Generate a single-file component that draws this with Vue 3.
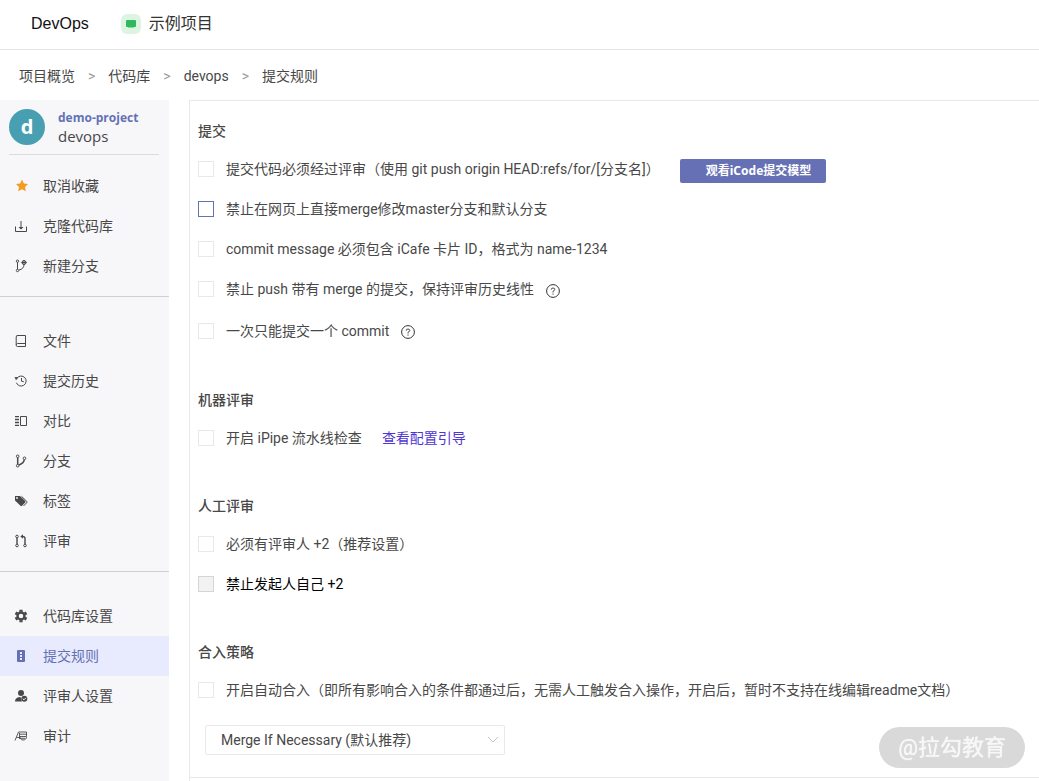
<script setup>
import { ref } from 'vue'

const crumbs = ['项目概览', '代码库', 'devops', '提交规则']

const groups = [
  [
    { icon: 'star', text: '取消收藏' },
    { icon: 'download', text: '克隆代码库' },
    { icon: 'fork', text: '新建分支' },
  ],
  [
    { icon: 'book', text: '文件' },
    { icon: 'history', text: '提交历史' },
    { icon: 'compare', text: '对比' },
    { icon: 'branch', text: '分支' },
    { icon: 'tags', text: '标签' },
    { icon: 'pull', text: '评审' },
  ],
  [
    { icon: 'gear', text: '代码库设置' },
    { icon: 'rules', text: '提交规则', active: true },
    { icon: 'reviewer', text: '评审人设置' },
    { icon: 'audit', text: '审计' },
  ],
]

const sections = [
  {
    title: '提交',
    rows: [
      { id: 'review', text: '提交代码必须经过评审（使用 git push origin HEAD:refs/for/[分支名]）', button: '观看iCode提交模型' },
      { id: 'web-merge', text: '禁止在网页上直接merge修改master分支和默认分支', focus: true },
      { id: 'card', text: 'commit message 必须包含 iCafe 卡片 ID，格式为 name-1234' },
      { id: 'linear', text: '禁止 push 带有 merge 的提交，保持评审历史线性', hint: true },
      { id: 'single', text: '一次只能提交一个 commit', hint: true },
    ],
  },
  { title: '机器评审', rows: [{ id: 'pipe', text: '开启 iPipe 流水线检查', link: '查看配置引导' }] },
  {
    title: '人工评审',
    rows: [
      { id: 'plus2', text: '必须有评审人 +2（推荐设置）' },
      { id: 'self', text: '禁止发起人自己 +2', disabled: true },
    ],
  },
  {
    title: '合入策略',
    rows: [{ id: 'auto', text: '开启自动合入（即所有影响合入的条件都通过后，无需人工触发合入操作，开启后，暂时不支持在线编辑readme文档）' }],
    select: true,
  },
]

const strategy = ref('necessary')
</script>

<template>
  <div class="page">
    <header class="top">
      <span class="brand">DevOps</span>
      <span class="project">
        <svg class="project-icon" viewBox="0 0 20 20" aria-hidden="true">
          <rect width="20" height="20" rx="6" fill="#def4e3" />
          <rect x="5" y="6" width="10" height="7" rx="1" fill="#2fb95c" />
          <path d="M7 13h6v1H7z" fill="#8ad7a1" />
        </svg>
        示例项目
      </span>
    </header>

    <nav class="crumbs" aria-label="breadcrumb">
      <template v-for="(c, i) in crumbs" :key="c">
        <span v-if="i" class="sep">&gt;</span>
        <a href="#">{{ c }}</a>
      </template>
    </nav>

    <div class="body">
      <aside class="side">
        <div class="repo">
          <span class="avatar">d</span>
          <div class="repo-text">
            <a href="#" class="owner">demo-project</a>
            <span class="name">devops</span>
          </div>
        </div>
        <ul v-for="(g, gi) in groups" :key="gi" class="group">
          <li v-for="item in g" :key="item.text">
            <a href="#" class="item" :class="{ active: item.active }">
              <svg class="icon" viewBox="0 0 14 14" fill="none" stroke="currentColor" aria-hidden="true">
                <path v-if="item.icon === 'star'" d="M8 0.500l1.900 4 4.100.5-3 2.900.8 4.300L8 10.200l-3.800 2 .8-4.300-3-2.900 4.100-.5z" fill="#f39c23" stroke="none" />
                <template v-else-if="item.icon === 'download'">
                  <path d="M1.500 7.500v5h11v-5M7 2v8" />
                  <path d="M4.500 8h5L7 10.500z" fill="currentColor" stroke="none" />
                </template>
                <template v-else-if="item.icon === 'fork'">
                  <circle cx="3.500" cy="2.200" r="1.200" /><circle cx="3.500" cy="11.500" r="1.200" /><circle cx="10" cy="3.500" r="2" />
                  <path d="M3.500 3.300v7M10 5.500c0 3-2 5-5 5.500M7.500 3.500h5M10 1v5" />
                </template>
                <template v-else-if="item.icon === 'book'">
                  <path d="M4 1.500h7.500v11H3.500a1.300 1.300 0 0 1-1.300-1.300V3A1.500 1.500 0 0 1 4 1.500zM2.300 11c.2-.8.600-1.500 1.500-1.500h7.700" />
                </template>
                <template v-else-if="item.icon === 'history'">
                  <path d="M3 4.200a5 5 0 1 1-.6 4.500M7.500 4v3.200l2.300.5" />
                  <path d="M.5 3l4 .2-2.500 3z" fill="currentColor" stroke="none" />
                </template>
                <template v-else-if="item.icon === 'compare'">
                  <path d="M1 2.500h4M1 5.500h4M1 8.500h4M1 11.500h4" />
                  <path d="M1 4h4M1 7h4M1 10h4" opacity="0.5" />
                  <path d="M6.500 2.500h6v9h-6z" />
                </template>
                <template v-else-if="item.icon === 'branch'">
                  <circle cx="3.700" cy="2.300" r="1.300" /><circle cx="3.700" cy="11.700" r="1.300" /><circle cx="10.500" cy="4.300" r="1.300" />
                  <path d="M3.700 3.600v6.800M10.300 5.600C10 8.300 7.500 10 5 11" stroke-width="1.500" />
                </template>
                <template v-else-if="item.icon === 'tags'">
                  <path d="M1 2v4.500l5.500 5.300q.8.700 1.500 0l3.200-3.200q.700-.8 0-1.500L6 2z" fill="currentColor" stroke="none" />
                  <path d="M7.500 2.300l5.200 5q.7.700 0 1.500l-3.200 3.200" />
                  <circle cx="3" cy="4" r=".9" fill="#f7f7fa" stroke="none" />
                </template>
                <template v-else-if="item.icon === 'pull'">
                  <circle cx="3" cy="2.500" r="1.300" /><circle cx="3" cy="11.500" r="1.300" /><circle cx="11" cy="11.500" r="1.300" />
                  <path d="M3 4v6M11 10V4.500Q11 2.500 8.500 2.500" stroke-width="1.400" />
                  <path d="M9 .3v4.400L6.300 2.500z" fill="currentColor" stroke="none" />
                </template>
                <template v-else-if="item.icon === 'gear'">
                  <circle cx="7" cy="7" r="3.500" stroke-width="2.400" />
                  <path d="M7 .8v2M7 11.200v2M1.500 3.800l1.800 1M10.700 9.200l1.800 1M1.500 10.200l1.800-1M10.700 4.800l1.800-1" stroke-width="3.200" />
                </template>
                <template v-else-if="item.icon === 'rules'">
                  <rect x="3" y="1" width="8" height="12" rx="1" fill="currentColor" stroke="none" />
                  <path d="M6 3h2v2H6zM6 6h2v2H6zM6 9h2v2H6z" fill="#e8ebfd" stroke="none" />
                </template>
                <template v-else-if="item.icon === 'reviewer'">
                  <circle cx="7" cy="4" r="3" fill="currentColor" stroke="none" />
                  <path d="M1 12.500c0-3 2-4.500 5.500-4.500l1.500 4.500z" fill="currentColor" stroke="none" />
                  <circle cx="10.300" cy="9.700" r="3" fill="currentColor" stroke="none" />
                  <path d="M8.800 9.700l1.200 1.100 2-2" stroke="#f7f7fa" />
                </template>
                <template v-else>
                  <path d="M1 11.500L4.500 3h8v4.500c0 2.500-1.500 3.500-3.500 3.500S6 9.500 6 7.500M5.500 5.200h7M6 7.500h6M2.500 8.500h3M7 9.300h4M5.500 4v6" stroke-width=".9" />
                </template>
              </svg>
              <span>{{ item.text }}</span>
            </a>
          </li>
        </ul>
      </aside>

      <main class="main">
        <form class="rules" @submit.prevent>
          <section v-for="s in sections" :key="s.title" class="section">
            <h2>{{ s.title }}</h2>
            <div v-for="r in s.rows" :key="r.id" class="row" :class="{ hinted: r.hint }">
              <input :id="r.id" type="checkbox" class="box" :class="{ focus: r.focus }" :disabled="r.disabled" />
              <label :for="r.id">{{ r.text }}</label>
              <button v-if="r.button" type="button" class="watch">{{ r.button }}</button>
              <a v-if="r.link" href="#" class="guide">{{ r.link }}</a>
              <button v-if="r.hint" type="button" class="help" aria-label="说明">
                <svg viewBox="0 0 14 14" fill="none" stroke="currentColor" aria-hidden="true">
                  <circle cx="7" cy="7" r="6.400" />
                  <path d="M5.200 5.700Q5.200 4 7 4t1.800 1.500Q8.800 6.500 7 7.300v1.200M7 9.500v1.200" stroke-width=".9" />
                </svg>
              </button>
            </div>
            <div v-if="s.select" class="select-wrap">
              <select v-model="strategy" aria-label="合入策略">
                <option value="necessary">Merge If Necessary (默认推荐)</option>
              </select>
              <svg class="arrow" viewBox="0 0 12 8" fill="none" stroke="#c4c4c4" aria-hidden="true">
                <path d="M1 1l5 5 5-5" />
              </svg>
            </div>
          </section>
        </form>
      </main>
    </div>
    <div class="mark">@拉勾教育</div>
  </div>
</template>

<style>
body {
  background: #fff;
}
</style>

<style scoped>
.page {
  display: flex;
  flex-direction: column;
  min-height: 100vh;
  font: 14px/20px Roboto, "Noto Sans CJK SC", sans-serif;
  color: #484848;
}
a {
  color: inherit;
  text-decoration: none;
}
.top {
  display: flex;
  align-items: center;
  gap: 32px;
  box-sizing: border-box;
  height: 50px;
  padding: 0 31px 2px;
  border-bottom: 1px solid #e5e5e5;
  font-size: 16px;
  color: #333;
}
.brand {
  font-family: "Liberation Sans", Arial, sans-serif;
  color: #111;
}
.project {
  display: flex;
  align-items: center;
  gap: 8px;
}
.project-icon {
  width: 20px;
  height: 20px;
}
.crumbs {
  display: flex;
  align-items: center;
  gap: 13px;
  box-sizing: border-box;
  height: 50px;
  padding: 2px 19px 0;
}
.sep {
  font-size: 14px;
  color: #999;
}
.body {
  display: flex;
  flex: 1;
  gap: 20px;
}
.side {
  flex: 0 0 169px;
  background: #f7f7fa;
}
.repo {
  display: flex;
  align-items: center;
  gap: 13px;
  height: 54px;
  margin: 0 10px 11px 9px;
  border-bottom: 1px solid #dcdcdc;
  font-family: "Open Sans", "Noto Sans", sans-serif;
}
.avatar {
  width: 36px;
  height: 36px;
  border-radius: 50%;
  background: #489fb2;
  color: #fff;
  font-size: 20px;
  font-weight: 700;
  line-height: 36px;
  text-align: center;
}
.repo-text {
  display: flex;
  flex-direction: column;
  line-height: 18px;
}
.owner {
  font-size: 12px;
  font-weight: 700;
  color: #6371b5;
}
.name {
  font-size: 15px;
}
.group {
  list-style: none;
  margin: 0 0 24px;
  padding: 0 0 10px;
  border-bottom: 1px solid #cfcfcf;
}
.group:last-child {
  border: 0;
  margin: 0;
}
.item {
  display: flex;
  align-items: center;
  gap: 15px;
  height: 40px;
  padding-left: 14px;
}
.item.active {
  background: #e8ebfd;
  color: #6371b5;
}
.icon {
  width: 14px;
  height: 14px;
}
.main {
  flex: 1;
  min-width: 0;
  border: solid #e8e8e8;
  border-width: 1px 0 0 1px;
}
.rules {
  display: flex;
  flex-direction: column;
  gap: 30px;
  padding: 12px 0 22px 8px;
  border-bottom: 1px solid #e8e8e8;
}
h2 {
  margin: 0;
  font-size: 14px;
  line-height: 36px;
  font-weight: 500;
}
.row {
  display: flex;
  align-items: center;
  height: 40px;
  white-space: nowrap;
}
.row.hinted + .row.hinted {
  height: 43px;
}
.box {
  appearance: none;
  box-sizing: border-box;
  flex: none;
  width: 16px;
  height: 16px;
  margin: 0 12px 0 0;
  border: 1px solid #e8e8e8;
  background: #fff;
}
.box.focus {
  border-color: #6371b5;
}
.box:disabled {
  border-color: #d5d5d5;
  background: #f2f2f2;
}
.box:disabled + label {
  color: #000;
}
.watch {
  height: 24px;
  margin: 4px 0 0 20px;
  padding: 0 15px 0 26px;
  border: 0;
  border-radius: 2px;
  background: #6671b5;
  color: #fff;
  font: 700 12px/24px "Noto Sans", "Noto Sans CJK SC", sans-serif;
}
.guide {
  margin-left: 20px;
  color: #4f35d2;
}
.help {
  width: 14px;
  height: 14px;
  margin: 3px 0 0 12px;
  padding: 0;
  border: 0;
  background: none;
  color: #333;
}
.help svg {
  display: block;
}
.select-wrap {
  position: relative;
  width: 300px;
  margin: 15px 0 0 7px;
}
select {
  appearance: none;
  display: block;
  box-sizing: border-box;
  width: 100%;
  height: 30px;
  padding: 0 30px 0 15px;
  border: 1px solid #e8e8e8;
  border-radius: 2px;
  background: #fff;
  color: inherit;
  font: inherit;
}
.arrow {
  position: absolute;
  right: 6px;
  top: 11px;
  width: 12px;
  height: 8px;
  pointer-events: none;
}
.mark {
  position: fixed;
  right: 14px;
  bottom: 13px;
  padding: 0 19px;
  border-radius: 21px;
  background: #d9d9d9;
  color: #f7f7f7;
  font-size: 22px;
  line-height: 41px;
  text-shadow: 0 0 1px #fff;
}
</style>
